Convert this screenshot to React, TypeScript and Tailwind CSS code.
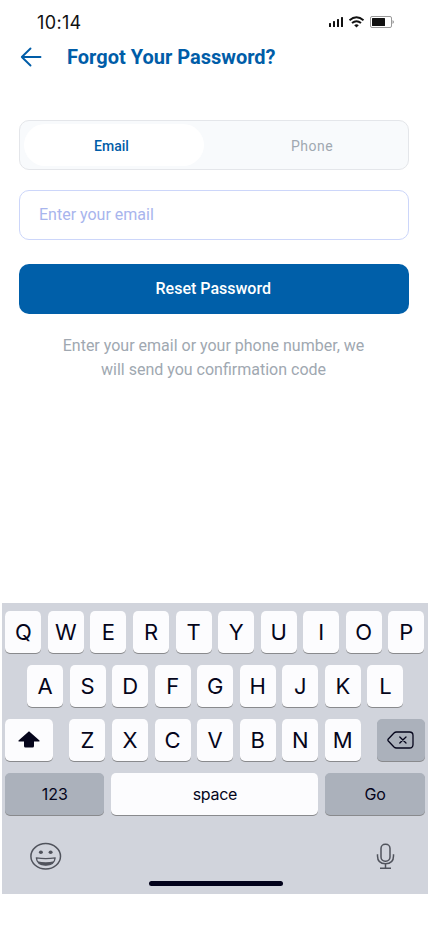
import React from "react";

const keyBase =
  "flex h-[42px] items-center justify-center rounded-[5px] shadow-[0_1px_0_#898a8d] text-[#05051b]";

function Letter({ children }: { children: string }) {
  return (
    <div className={`${keyBase} w-9 shrink-0 bg-[#fcfcfe] pt-px text-[22px] font-[370]`}>
      {children}
    </div>
  );
}

function LetterRow({ letters }: { letters: string }) {
  return (
    <div className="flex gap-[6.55px]">
      {letters.split("").map((l) => (
        <Letter key={l}>{l}</Letter>
      ))}
    </div>
  );
}

function StatusBar() {
  return (
    <div className="flex h-11 items-center justify-between pl-[37px] pr-[34px] text-[#111]">
      <span className="pt-[2px] font-[Inter,sans-serif] text-[18px] font-[430] leading-none tracking-[0.35px]">
        10:14
      </span>
      <svg width="66" height="14" viewBox="0 0 66 14" fill="none">
        <g fill="#111">
          <rect x="1" y="8" width="2" height="4" rx="0.5" />
          <rect x="5" y="6" width="2" height="6" rx="0.5" />
          <rect x="9" y="4" width="2" height="8" rx="0.5" />
          <rect x="13" y="2" width="2" height="10" rx="0.5" />
        </g>
        <g stroke="#111" strokeWidth="1.9">
          <path d="M21.500 5.200Q28.500-0.600 35.500 5.200" />
          <path d="M24 8.100Q28.500 4.300 33 8.100" />
        </g>
        <path d="M26.200 10.200Q28.500 8.500 30.800 10.200L28.500 12.500Z" fill="#111" />
        <rect x="42.500" y="1.500" width="21" height="11" rx="1.500" stroke="#999" />
        <rect x="44" y="3" width="13" height="8" rx="0.500" fill="#111" />
        <path d="M64.500 5Q66 6 66 7T64.500 9Z" fill="#999" />
      </svg>
    </div>
  );
}

function Keyboard() {
  return (
    <div className="ml-[2px] h-[291px] bg-[#d1d4dc] pt-2 pl-[3.400px] pr-[3.200px] font-[Inter,sans-serif]">
      <div className="flex flex-col gap-3">
        <LetterRow letters="QWERTYUIOP" />
        <div className="pl-[21.600px]">
          <LetterRow letters="ASDFGHJKL" />
        </div>
        <div className="flex justify-between">
          <div className={`${keyBase} w-12 bg-[#fcfcfe]`}>
            <svg className="mb-px" width="22" height="17" viewBox="0 0 22 17" fill="#05051b">
              <path d="M11 0.300L21.500 9.500Q22 10.500 21 10.500H16V15Q16 16.500 14.500 16.500H7.500Q6 16.500 6 15V10.500H1Q0 10.500 0.500 9.500Z" />
            </svg>
          </div>
          <LetterRow letters="ZXCVBNM" />
          <div className={`${keyBase} w-12 bg-[#abb1bb]`}>
            <svg width="27" height="18" viewBox="0 0 27 18" fill="none" stroke="#05051b" strokeWidth="1.300" strokeLinecap="round" strokeLinejoin="round">
              <path d="M9.500 1H22.500Q26 1 26 4.500V13.500Q26 17 22.500 17H9.500Q8 17 7 16L1.300 10Q0.500 9 1.300 8L7 2Q8 1 9.500 1Z" />
              <path d="M12.800 6L19 12M19 6L12.800 12" />
            </svg>
          </div>
        </div>
        <div className="flex justify-between text-base font-[370]">
          <div className={`${keyBase} w-[99px] bg-[#abb1bb]`}>123</div>
          <div className={`${keyBase} w-[207px] bg-[#fcfcfe] tracking-[-0.3px]`}>space</div>
          <div className={`${keyBase} w-[99.500px] bg-[#abb1bb] tracking-[-0.3px]`}>Go</div>
        </div>
      </div>
      <div className="mt-[27px] flex h-7 items-center justify-between pl-[24.600px] pr-[30px]">
        <svg width="32" height="28" viewBox="0 0 32 28" fill="none">
          <ellipse cx="15.700" cy="14.300" rx="14.800" ry="12.700" stroke="#50535c" strokeWidth="1.500" />
          <ellipse cx="10.900" cy="10.200" rx="2" ry="1.700" fill="#50535c" />
          <ellipse cx="20.600" cy="10.200" rx="2" ry="1.700" fill="#50535c" />
          <path d="M6.300 15.800Q15.700 17.300 25.200 15.800C24.700 21 20.500 23.200 15.700 23.200S6.800 21 6.300 15.800Z" stroke="#50535c" strokeWidth="1.300" strokeLinejoin="round" />
          <path d="M7.300 19.200Q15.700 21.300 24.200 19.200Q22 23.200 15.700 23.200T7.300 19.200Z" fill="#50535c" />
        </svg>
        <svg width="19" height="28" viewBox="0 0 19 28" fill="none" stroke="#50535c" strokeWidth="1.500">
          <rect x="5" y="2.200" width="9" height="17" rx="4.200" />
          <path d="M1.500 12.200V14C1.500 19 4.500 21.700 9.500 21.700S17.500 19 17.500 14V12.200M9.500 21.700V26M4 26.200H15" />
        </svg>
      </div>
      <div className="mt-[11px] ml-[143.600px] h-[5px] w-[134px] rounded-full bg-[#02021a]" />
    </div>
  );
}

export default function App() {
  return (
    <main className="flex h-[926px] w-[428px] flex-col overflow-hidden bg-white font-[Roboto,sans-serif]">
      <StatusBar />
      <header className="flex h-[26px] items-center gap-[25px] pl-5 text-[#005da8]">
        <svg width="22" height="20" viewBox="0 0 22 20" fill="none" stroke="currentColor" strokeWidth="1.900" strokeLinecap="round" strokeLinejoin="round">
          <path d="M20.500 10H1.800M10.500 1.500L1.800 10L10.500 18.500" />
        </svg>
        <h1 className="text-[20px] font-bold leading-6">Forgot Your Password?</h1>
      </header>
      <section className="mt-[50px] flex flex-col px-[19px]">
        <div className="flex h-[50px] rounded-[10px] border border-[#e4e6ea] bg-[#f8fafc] p-[3px] text-sm font-medium">
          <button className="ml-px w-[180px] rounded-[21px] bg-white pr-[5px] pt-px text-[#005da8]">Email</button>
          <button className="flex-1 pl-[15px] pt-px font-[450] tracking-[0.5px] text-[#a0a8b1]">Phone</button>
        </div>
        <input
          className="mt-5 h-[50px] rounded-[10px] border border-[#ccd6fa] px-[19px] pb-[2px] text-base outline-none placeholder:text-[#a8b5ed]"
          placeholder="Enter your email"
        />
        <button className="mt-6 h-[50px] rounded-[10px] bg-[#005fa9] pr-[1.500px] text-base font-medium text-white">
          Reset Password
        </button>
        <p className="mt-5 pr-px text-center text-base leading-6 text-[#a0a8b1]">
          Enter your email or your phone number, we
          <br />
          will send you confirmation code
        </p>
      </section>
      <div className="flex-1" />
      <Keyboard />
      <div className="h-8" />
    </main>
  );
}
